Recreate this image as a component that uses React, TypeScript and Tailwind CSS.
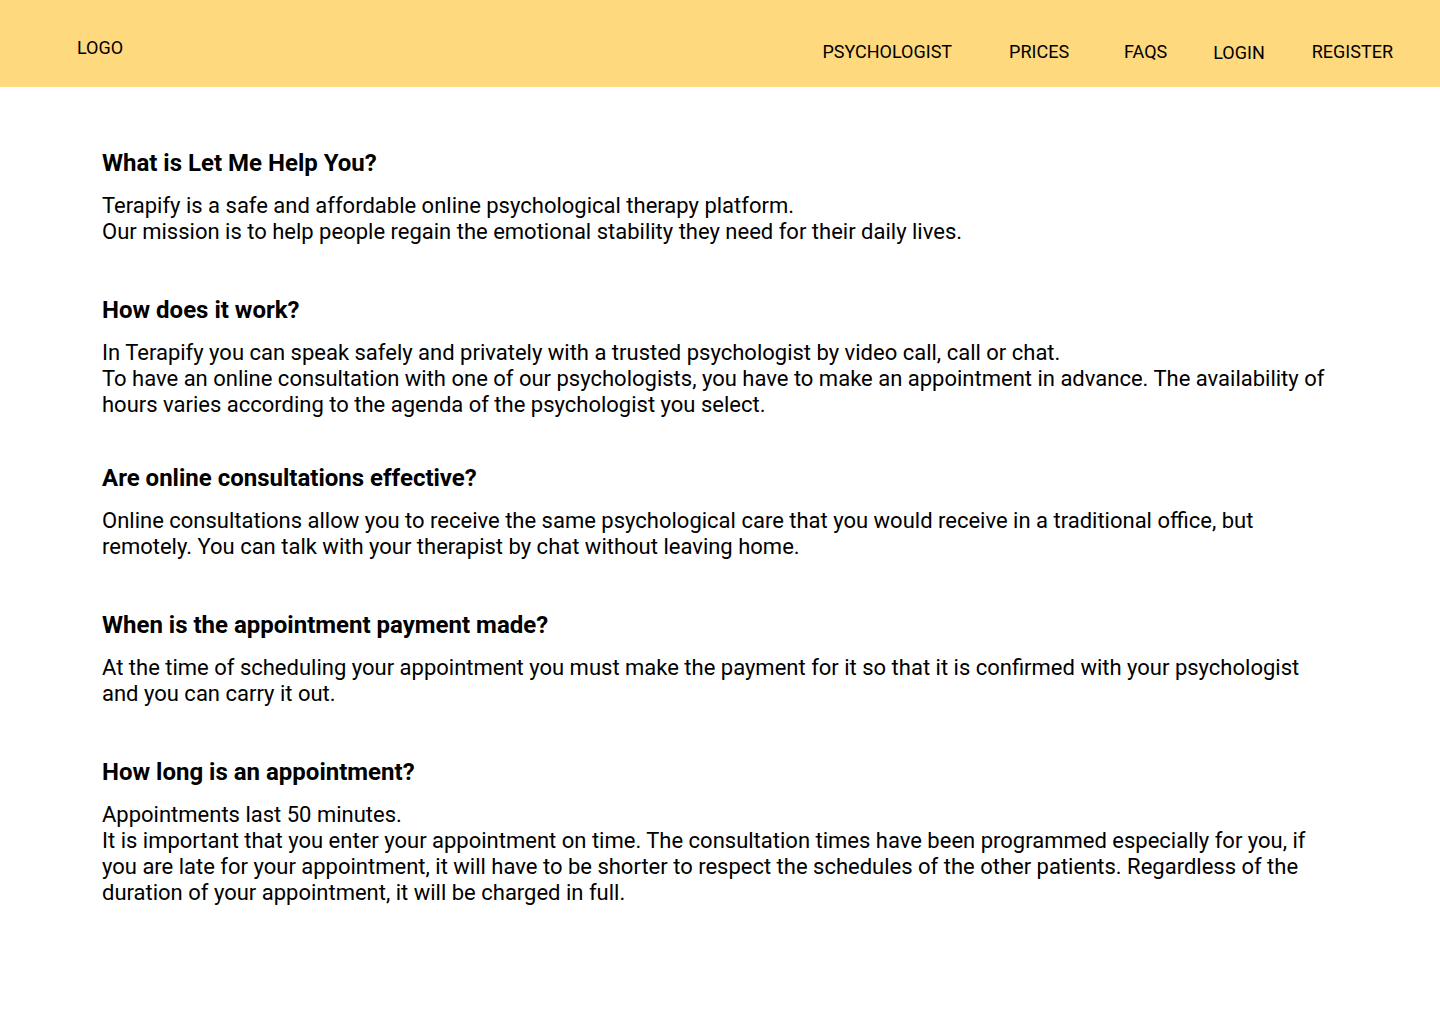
const sections = [
  {
    title: "What is Let Me Help You?",
    body: [
      "Terapify is a safe and affordable online psychological therapy platform.",
      "Our mission is to help people regain the emotional stability they need for their daily lives.",
    ],
    gap: "mb-[52px]",
  },
  {
    title: "How does it work?",
    body: [
      "In Terapify you can speak safely and privately with a trusted psychologist by video call, call or chat.",
      "To have an online consultation with one of our psychologists, you have to make an appointment in advance. The availability of hours varies according to the agenda of the psychologist you select.",
    ],
    gap: "mb-[47px]",
  },
  {
    title: "Are online consultations effective?",
    body: [
      "Online consultations allow you to receive the same psychological care that you would receive in a traditional office, but remotely. You can talk with your therapist by chat without leaving home.",
    ],
    gap: "mb-[52px]",
  },
  {
    title: "When is the appointment payment made?",
    body: [
      "At the time of scheduling your appointment you must make the payment for it so that it is confirmed with your psychologist and you can carry it out.",
    ],
    gap: "mb-[52px]",
  },
  {
    title: "How long is an appointment?",
    body: [
      "Appointments last 50 minutes.",
      "It is important that you enter your appointment on time. The consultation times have been programmed especially for you, if you are late for your appointment, it will have to be shorter to respect the schedules of the other patients. Regardless of the duration of your appointment, it will be charged in full.",
    ],
    gap: "mb-0",
  },
];

export default function App() {
  return (
    <div className="min-h-screen bg-white text-black font-['Roboto',sans-serif]">
      {/* Header */}
      <header className="h-[87px] bg-[#fed97e] flex items-start">
        <div className="pl-[77px] pt-[37px] text-[18px] leading-[22px]">LOGO</div>
        <nav className="ml-auto flex items-start pt-[41px] pr-[47px] text-[18px] leading-[22px]">
          <a className="mr-[57px]">PSYCHOLOGIST</a>
          <a className="mr-[55px]">PRICES</a>
          <a className="mr-[46px]">FAQS</a>
          <a className="mr-[47px] mt-[1px]">LOGIN</a>
          <a>REGISTER</a>
        </nav>
      </header>

      {/* FAQ list */}
      <main className="pt-[63px] px-[102px]">
        {sections.map((s) => (
          <section key={s.title} className={s.gap}>
            <h2 className="text-[24px] leading-[26px] font-bold mb-[17px]">{s.title}</h2>
            {s.body.map((p, i) => (
              <p key={i} className="text-[22px] leading-[26px]">
                {p}
              </p>
            ))}
          </section>
        ))}
      </main>
    </div>
  );
}
